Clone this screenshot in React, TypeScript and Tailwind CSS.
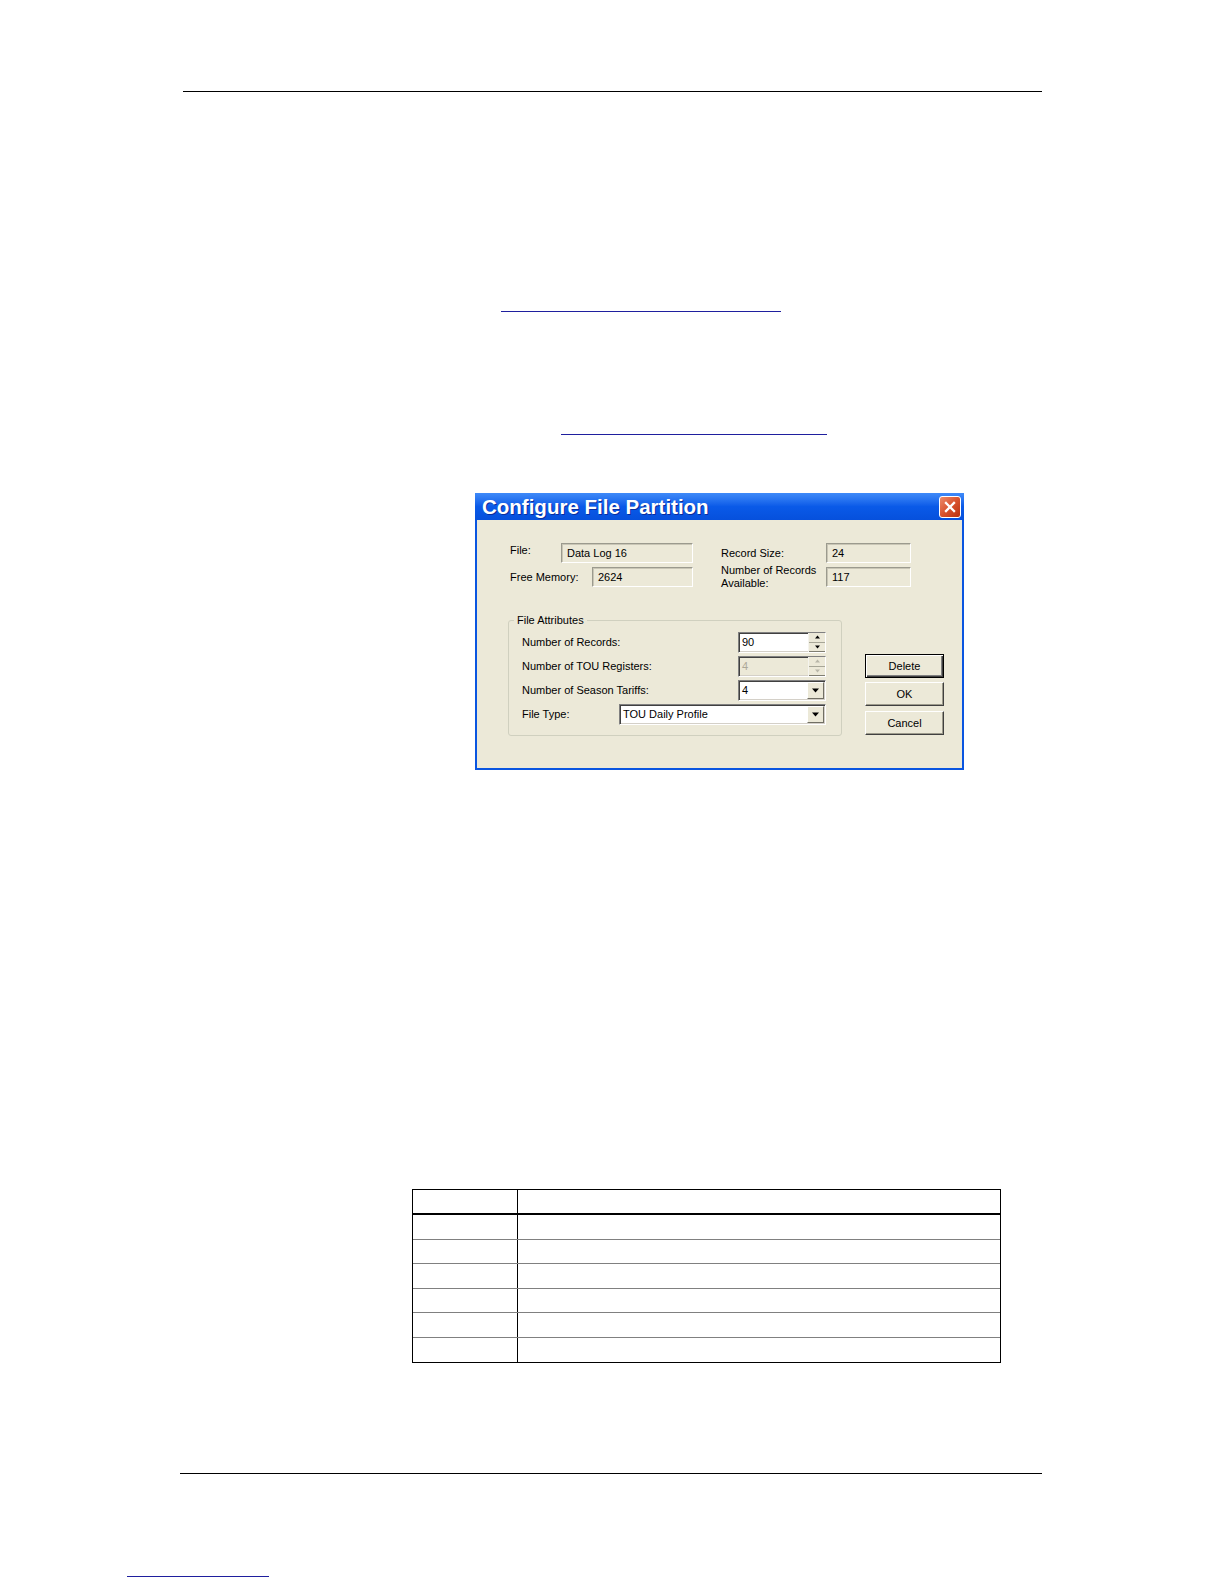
const sunkenWhite =
  'border-t border-l border-t-[#808080] border-l-[#808080] border-b border-r border-b-white border-r-white shadow-[inset_1px_1px_0_#404040,inset_-1px_-1px_0_#d4d0c8]';

const sunkenReadOnly =
  'border-t border-l border-t-[#9b9a8e] border-l-[#9b9a8e] border-b border-r border-b-white border-r-white shadow-[inset_1px_1px_0_#c9c6b6]';

function ReadOnlyBox({ value, width }: { value: string; width: string }) {
  return (
    <div className={`${width} h-[20px] bg-[#ece9d8] ${sunkenReadOnly} flex items-center pl-[5px]`}>
      {value}
    </div>
  );
}

function Tri({ up, color = '#000', size = 7 }: { up?: boolean; color?: string; size?: number }) {
  return (
    <svg width={size} height={Math.ceil(size / 2) + 1} viewBox="0 0 7 4">
      {up ? <path d="M0 4 L3.5 0 L7 4 Z" fill={color} /> : <path d="M0 0 L7 0 L3.5 4 Z" fill={color} />}
    </svg>
  );
}

function SpinEdit({ value, disabled }: { value: string; disabled?: boolean }) {
  const arrow = disabled ? '#b8b6a8' : '#000';
  return (
    <div
      className={`w-[88px] h-[21px] flex ${disabled ? 'bg-[#ece9d8] text-[#aca899]' : 'bg-white'} ${sunkenWhite}`}
    >
      <div className="flex-1 flex items-center pl-[3px]">{value}</div>
      <div className="w-[17px] flex flex-col bg-[#ece9d8] border-l border-[#f5f4ee]">
        <div className="flex-1 flex items-center justify-center border-b border-[#a7a697]">
          <Tri up color={arrow} size={5} />
        </div>
        <div className="flex-1 flex items-center justify-center border-b border-[#7f7e72]">
          <Tri color={arrow} size={5} />
        </div>
      </div>
    </div>
  );
}

function Combo({ value, width }: { value: string; width: string }) {
  return (
    <div className={`${width} h-[21px] flex bg-white ${sunkenWhite}`}>
      <div className="flex-1 flex items-center pl-[3px]">{value}</div>
      <div className="w-[17px] m-[1px] flex items-center justify-center bg-[#ece9d8] border-t border-l border-white border-b border-r border-b-[#716f64] border-r-[#716f64]">
        <Tri />
      </div>
    </div>
  );
}

const btn =
  'h-[24px] bg-[#ece9d8] border-t border-l border-white border-b border-r border-b-[#404040] border-r-[#404040] shadow-[inset_-1px_-1px_0_#9d9b8c]';

function Dialog() {
  return (
    <div className="w-[489px] h-[277px] flex flex-col bg-[#ece9d8] border-x-2 border-b-2 border-[#0a55e0] text-[11px] leading-[13px] text-black">
      <div className="-mx-[2px] h-[27px] flex items-center justify-between pl-[7px] pr-[3px] bg-linear-to-b from-[#3f8af8] via-[#0a5ae8] to-[#0650dc]">
        <span className="text-white font-bold text-[20.5px] leading-[24px] [text-shadow:1px_1px_0_#0b2d9c]">
          Configure File Partition
        </span>
        <div className="w-[22px] h-[22px] rounded-[3px] border border-white bg-linear-to-br from-[#eb8a6a] via-[#d9532e] to-[#b9300e] flex items-center justify-center">
          <svg width="12" height="12" viewBox="0 0 12 12">
            <path d="M2 2 L10 10 M10 2 L2 10" stroke="#fff" strokeWidth="2.3" strokeLinecap="square" />
          </svg>
        </div>
      </div>

      <div className="flex-1 pl-[31px] pt-[23px]">
        <div className="ml-[2px] flex">
          <div className="w-[183px] flex flex-col gap-[4px]">
            <div className="h-[20px] flex items-start justify-between">
              <span className="pt-[1px]">File:</span>
              <ReadOnlyBox value="Data Log 16" width="w-[132px]" />
            </div>
            <div className="h-[20px] flex items-center justify-between">
              <span>Free Memory:</span>
              <ReadOnlyBox value="2624" width="w-[101px]" />
            </div>
          </div>
          <div className="ml-[28px] w-[190px] flex flex-col gap-[4px]">
            <div className="h-[20px] flex items-center justify-between">
              <span>Record Size:</span>
              <ReadOnlyBox value="24" width="w-[85px]" />
            </div>
            <div className="h-[20px] flex items-center justify-between">
              <span>
                Number of Records
                <br />
                Available:
              </span>
              <ReadOnlyBox value="117" width="w-[85px]" />
            </div>
          </div>
        </div>

        <div className="mt-[27px] flex items-start">
          <fieldset className="w-[334px] border border-[#d0d0bf] rounded-[3px]">
            <legend className="ml-[5px] px-[3px] leading-[13px]">File Attributes</legend>
            <div className="pt-[5px] pl-[13px] pr-[15px] pb-[10px] flex flex-col gap-[3px]">
              <div className="h-[21px] flex items-center justify-between">
                <span>Number of Records:</span>
                <SpinEdit value="90" />
              </div>
              <div className="h-[21px] flex items-center justify-between">
                <span>Number of TOU Registers:</span>
                <SpinEdit value="4" disabled />
              </div>
              <div className="h-[21px] flex items-center justify-between">
                <span>Number of Season Tariffs:</span>
                <Combo value="4" width="w-[88px]" />
              </div>
              <div className="h-[21px] flex items-center justify-between">
                <span>File Type:</span>
                <Combo value="TOU Daily Profile" width="w-[207px]" />
              </div>
            </div>
          </fieldset>

          <div className="ml-[23px] mt-[40px] w-[79px] flex flex-col gap-[4px]">
            <button
              type="button"
              className="h-[24px] bg-[#ece9d8] border border-black shadow-[inset_1px_1px_0_#fff,inset_-1px_-1px_0_#404040,inset_-2px_-2px_0_#808080]"
            >
              Delete
            </button>
            <button type="button" className={btn}>
              OK
            </button>
            <button type="button" className={`${btn} mt-[1px]`}>
              Cancel
            </button>
          </div>
        </div>
      </div>
    </div>
  );
}

const rows = [
  'h-[25px] border-b border-[#808080]',
  'h-[24px] border-b border-[#808080]',
  'h-[25px] border-b border-[#808080]',
  'h-[24px] border-b border-[#808080]',
  'h-[25px] border-b border-[#808080]',
  'h-[24px]',
];

function EmptyTable() {
  return (
    <div className="w-[589px] border border-black">
      <div className="h-[25px] flex border-b-2 border-black">
        <div className="w-[105px] border-r border-black" />
        <div className="flex-1" />
      </div>
      {rows.map((cls, i) => (
        <div key={i} className={`flex ${cls}`}>
          <div className="w-[105px] border-r border-black" />
          <div className="flex-1" />
        </div>
      ))}
    </div>
  );
}

export default function App() {
  return (
    <div className="w-[1224px] h-[1584px] bg-white overflow-hidden font-['Liberation_Sans',Arial,sans-serif]">
      <div className="pt-[91px]">
        <div className="ml-[183px] w-[859px] h-px bg-black" />
        <div className="mt-[219px] ml-[501px] w-[280px] h-px bg-[#1f1f9e]" />
        <div className="mt-[122px] ml-[561px] w-[266px] h-px bg-[#1f1f9e]" />
        <div className="mt-[58px] ml-[475px]">
          <Dialog />
        </div>
        <div className="mt-[419px] ml-[412px]">
          <EmptyTable />
        </div>
        <div className="mt-[110px] ml-[180px] w-[862px] h-px bg-black" />
        <div className="mt-[102px] ml-[127px] w-[142px] h-px bg-[#1f1f9e]" />
      </div>
    </div>
  );
}
